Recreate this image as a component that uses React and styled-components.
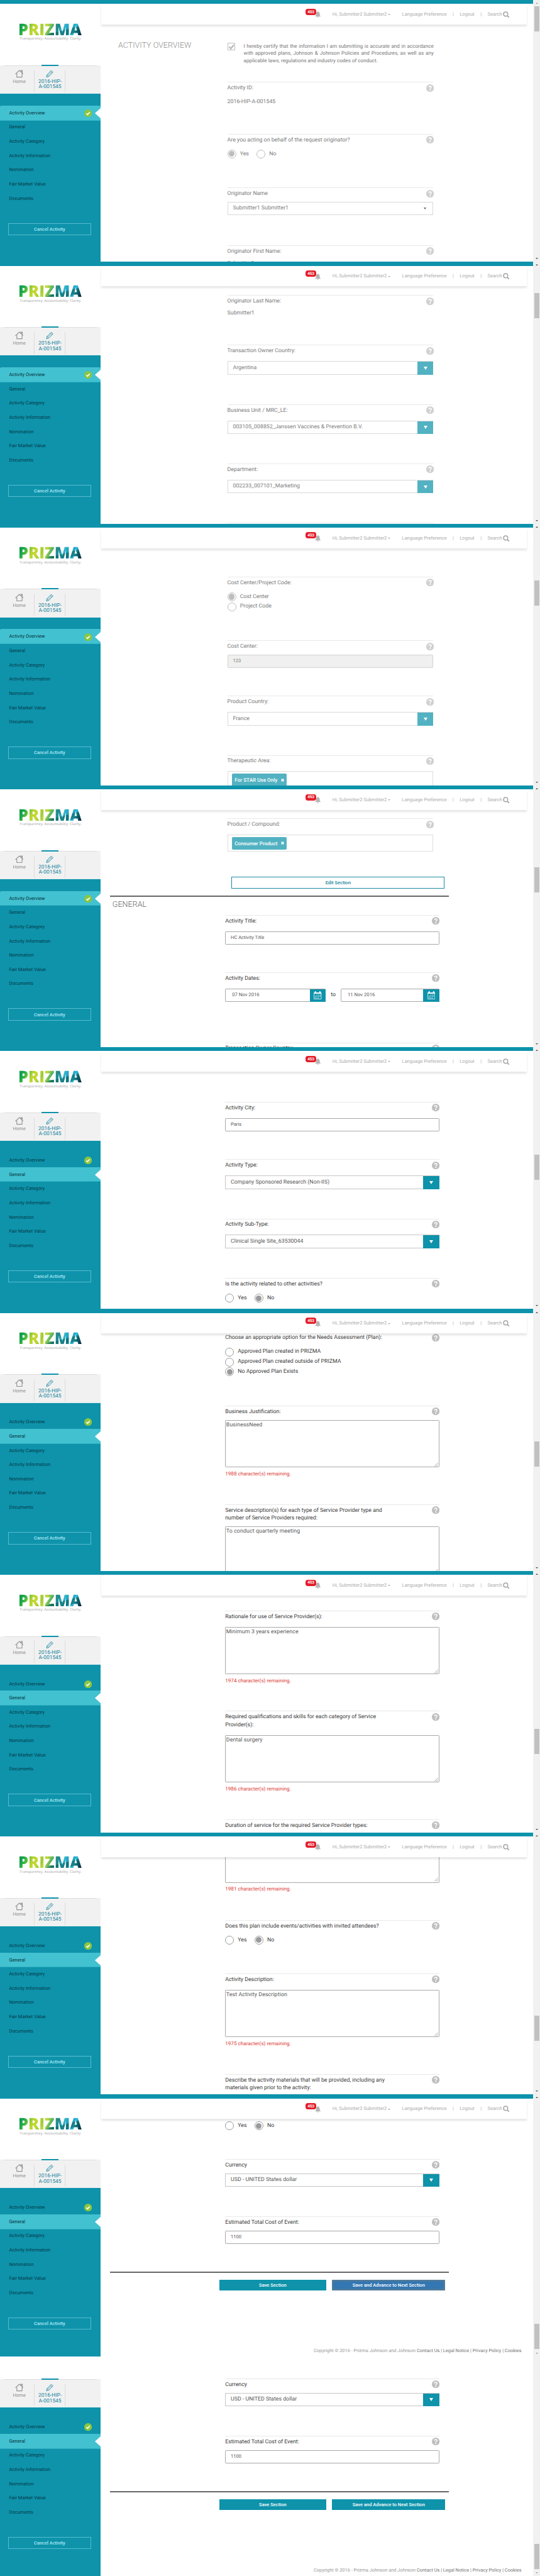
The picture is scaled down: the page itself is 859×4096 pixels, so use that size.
import React from "react";
import styled, { createGlobalStyle, css } from "styled-components";

// Design sizes are given for a 1366px wide page and drawn at this scale.
const SCALE = 0.62887;
const u = (n) => `${(n * SCALE).toFixed(3)}px`;

const teal = "#0e93ab";
const aqua = "#42c1d0";

const GlobalStyle = createGlobalStyle`
  *, *::before, *::after { box-sizing: border-box; }
  html, body { margin: 0; padding: 0; background: #fff; }
  body {
    font-family: Roboto, "Liberation Sans", sans-serif;
    font-size: ${u(14)};
    line-height: ${u(20)};
    color: #444;
    text-rendering: geometricPrecision;
  }
`;

const Page = styled.div`
  width: ${u(1366)};
  height: 4096px;
  overflow: hidden;
`;

const Frame = styled.section`
  display: grid;
  grid-template-columns: ${u(254.4)} ${u(1094.6)} ${u(17)};
  grid-template-rows: ${(p) => u(p.$short ? 0 : 10)} ${(p) => u(p.$short ? 555 : 652)};
  height: ${(p) => u(p.$short ? 555 : 662)};
  overflow: hidden;
  background: #fff;
`;

const TopBand = styled.div`
  grid-column: 1 / 3;
  background: ${teal};
`;

/* ---------- sidebar ---------- */

const Sidebar = styled.aside`
  grid-row: 2;
  grid-column: 1;
  display: flex;
  flex-direction: column;
  background: ${teal};
`;

const Brand = styled.div`
  height: ${(p) => u(p.$short ? 58 : 155)};
  padding: ${(p) => (p.$short ? 0 : `${u(40.5)} 0 0 ${u(46)}`)};
  background: #fff;
`;

const Logo = styled.div`
  width: ${u(162)};
  height: ${u(46)};
  font: 800 ${u(40.5)} / ${u(50)} "Open Sans", Roboto, sans-serif;
  white-space: nowrap;
  color: transparent;
  background:
    linear-gradient(165deg, transparent 62%, rgba(0, 75, 55, 0.45) 64% 78%, transparent 80%),
    linear-gradient(115deg, #0b8a45 0%, #17a94c 11%, #5fbf3c 17%, #b5d433 24%, #c6d92e 31%, #9bcb3a 38%, #c3da3a 43%, #5fb860 50%, #2b8c7c 56%, #1d8a93 60%, #35b6cf 68%, #1795b5 76%, #2fb9da 84%, #0f5f78 90%, #06222e 96%);
  background-clip: text;
  -webkit-background-clip: text;
`;

const Tagline = styled.div`
  margin-top: ${u(-3.5)};
  padding-left: ${u(3.5)};
  font: 400 ${u(9.15)} / ${u(12)} "Open Sans", sans-serif;
  color: #a3a3a3;
  white-space: nowrap;
`;

const Tabs = styled.nav`
  display: flex;
  height: ${u(72)};
  padding: 0 ${u(9)};
  background: #f1f1f1;
  border-bottom: 1px solid #e3eef0;
`;

const Tab = styled.div`
  position: relative;
  display: flex;
  flex-direction: column;
  align-items: center;
  width: ${(p) => u(p.$w)};
  padding-top: ${u(10)};
  border-top: 1px solid #dcdcdc;
  font-size: ${(p) => u(p.$active ? 13.35 : 12)};
  line-height: ${u(13)};
  text-align: center;
  color: ${(p) => (p.$active ? "#1b87a0" : "#8f8f8f")};

  svg { height: ${u(20)}; margin-bottom: ${u(4)}; }

  ${(p) => !p.$last && css`
    &::after {
      content: "";
      position: absolute;
      right: 0;
      top: ${u(11)};
      height: ${u(56)};
      border-right: 1px solid #dcdcdc;
    }
  `}

  ${(p) => p.$active && css`
    &::before {
      content: "";
      position: absolute;
      top: ${u(-3)};
      left: ${u(17.5)};
      width: ${u(42)};
      height: ${u(3.2)};
      background: ${teal};
    }
  `}
`;

const Menu = styled.ul`
  list-style: none;
  margin: ${u(30)} 0 0;
  padding: 0;
`;

const MenuItem = styled.li`
  position: relative;
  display: flex;
  align-items: center;
  justify-content: space-between;
  height: ${u(36)};
  padding: ${u(3)} ${u(22)} 0 ${u(23)};
  font-size: ${u(12)};
  color: #063a48;
  white-space: nowrap;

  ${(p) => p.$active && css`
    color: #06323c;
    background: ${aqua};
    box-shadow: 0 ${u(1)} 0 ${aqua};
    border-radius: ${p.$first ? `${u(4)} ${u(4)} 0 0` : 0};

    &::after {
      content: "";
      position: absolute;
      right: 0;
      top: ${u(6.5)};
      border-style: solid;
      border-color: transparent #fff transparent transparent;
      border-width: ${u(13.5)} ${u(15)} ${u(13.5)} 0;
    }
  `}
`;

const CancelButton = styled.button`
  width: ${u(209)};
  height: ${u(31)};
  margin: ${u(45)} 0 0 ${u(21)};
  padding: 0;
  border: 1px solid #58bccd;
  background: transparent;
  font: 500 ${u(11.9)} Roboto, sans-serif;
  color: #a9e6f3;
`;

/* ---------- header ---------- */

const Main = styled.main`
  grid-row: 2;
  grid-column: 2;
  display: flex;
  flex-direction: column;
  min-width: 0;
`;

const Header = styled.header`
  position: relative;
  z-index: 1;
  display: flex;
  flex: none;
  align-items: center;
  height: ${u(52)};
  margin: 0 ${u(17)} 0 ${u(2)};
  padding: ${u(2)} ${u(43)} 0 0;
  justify-content: flex-end;
  font-size: ${u(12)};
  color: #adadad;
  white-space: nowrap;
  background: #fff;
  box-shadow: 0 ${u(5)} ${u(5)} rgba(0, 0, 0, 0.1);
`;

const Notifications = styled.div`
  display: flex;
  align-items: center;
  margin-right: ${u(29)};
`;

const Badge = styled.span`
  display: flex;
  align-items: center;
  justify-content: center;
  z-index: 1;
  width: ${u(28)};
  height: ${u(16)};
  margin: ${u(-14)} ${u(-3.5)} 0 0;
  border-radius: ${u(6)};
  background: #e41e2b;
  color: #fff;
  font-size: ${u(10)};
  font-weight: 700;
`;

const Caret = styled.span`
  width: 0;
  height: 0;
  margin: ${(p) => p.$margin || 0};
  border: solid transparent;
  border-width: ${(p) => `${u(p.$h)} ${u(p.$w / 2)} 0`};
  border-top-color: ${(p) => p.$color || "currentColor"};
`;

const Pipe = styled.span`
  width: ${u(33)};
  text-align: center;
`;

/* ---------- form ---------- */

const Content = styled.div`
  display: flex;
  flex: 1;
  flex-direction: column;
  min-height: 0;
  overflow: hidden;
`;

const Section = styled.div`
  flex: none;
  width: ${(p) => u(p.$faded ? 521 : 541.5)};
  margin-left: ${(p) => u(p.$faded ? 320.6 : 315.2)};
  padding-top: ${(p) => u(p.$top || 0)};
  margin-top: ${(p) => u(p.$shift || 0)};
  --label: ${(p) => (p.$faded ? "#7c7c7c" : "#3c3c3c")};
  --value: ${(p) => (p.$faded ? "#808080" : "#5a5a5a")};
  --line: ${(p) => (p.$faded ? "#d2d2d2" : "#a9a9a9")};
  --box: ${(p) => (p.$faded ? "#d9d9d9" : "#c6c6c6")};
  --accent: ${(p) => (p.$faded ? "#52b2c2" : teal)};
  --help: ${(p) => (p.$faded ? "#d0d0d0" : "#bfbfbf")};
  --radio: ${(p) => (p.$faded ? "#bdbdbd" : "#9a9a9a")};
`;

const FieldBox = styled.div`
  height: ${(p) => u(p.$h)};
  border-top: 1px solid ${(p) => (p.$bare ? "transparent" : "#e9e9e9")};
`;

const LabelRow = styled.div`
  display: flex;
  justify-content: space-between;
  align-items: flex-start;
  height: ${(p) => u(p.$offset - 1.5)};
  padding-top: ${u(4.5)};
`;

const LabelText = styled.label`
  max-width: ${u(415)};
  color: var(--label);
`;

const HelpIcon = styled.svg`
  flex: none;
  width: ${u(19.5)};
  height: ${u(19.5)};
  margin: ${u(-0.8)} ${u(-1)} 0 0;
  fill: var(--help);
`;

const Value = styled.div`
  color: var(--label);
`;

const Control = styled.div`
  display: flex;
  align-items: center;
  justify-content: space-between;
  height: ${u(34)};
  width: ${(p) => (p.$w ? u(p.$w) : "100%")};
  padding-left: ${(p) => u(p.$pad || 12.5)};
  border: 1px solid ${(p) => (p.$input ? "var(--line)" : "var(--box)")};
  border-radius: ${(p) => (p.$input ? u(2) : 0)};
  background: ${(p) => (p.$disabled ? "#f0f0f0" : "#fff")};
  font-size: ${(p) => u(p.$size || 14)};
  color: var(--value);
  white-space: nowrap;
`;

const ControlButton = styled.span`
  display: flex;
  align-items: center;
  justify-content: center;
  align-self: stretch;
  width: ${u(40.5)};
  margin: 0 -1px -1px 0;
  background: var(--accent);
  color: #fff;
`;

const RadioGroup = styled.div`
  display: flex;
  flex-direction: ${(p) => (p.$stack ? "column" : "row")};
  gap: ${(p) => u(p.$stack ? 3.2 : 19.5)};
`;

const RadioLabel = styled.span`
  display: flex;
  align-items: center;
  gap: ${u(9.5)};
  height: ${u(22)};
  color: var(--label);
  white-space: nowrap;
`;

const RadioDot = styled.i`
  display: flex;
  flex: none;
  align-items: center;
  justify-content: center;
  width: ${u(22.5)};
  height: ${u(22.5)};
  border: 1px solid var(--radio);
  border-radius: 50%;

  &::after {
    content: "";
    width: ${u(14.5)};
    height: ${u(14.5)};
    border-radius: 50%;
    background: ${(p) => (p.$on ? "var(--radio)" : "transparent")};
  }
`;

const TextBox = styled.div`
  display: flex;
  justify-content: space-between;
  height: ${u(120)};
  padding: ${u(2)} ${u(1)} ${u(1)} ${u(1)};
  border: 1px solid #a9a9a9;
  border-radius: ${u(2)};
  color: var(--value);
  letter-spacing: ${u(0.16)};
`;

const Grip = styled.svg`
  align-self: flex-end;
  width: ${u(9)};
  height: ${u(9)};
  margin-left: auto;
  stroke: #666;
  fill: none;
`;

const Remaining = styled.div`
  padding-top: ${u(5.5)};
  font-size: ${u(12.95)};
  color: #dc3b35;
`;

const TagBox = styled.div`
  height: ${u(43.5)};
  padding: ${u(4.5)} ${u(10)};
  border: 1px solid #dedede;
`;

const Tag = styled.span`
  display: inline-flex;
  align-items: center;
  gap: ${u(9)};
  height: ${u(31.5)};
  padding: 0 ${u(7)};
  border-radius: ${u(3)};
  background: var(--accent);
  color: #fff;
  font-size: ${u(12.95)};
  font-weight: 500;
  white-space: nowrap;

  svg { width: ${u(8)}; height: ${u(8)}; stroke: #fff; }
`;

const DateRow = styled.div`
  display: flex;
  align-items: center;
  justify-content: space-between;
  color: var(--label);
`;

const Intro = styled.div`
  display: flex;
  flex: none;
  align-items: flex-start;
  height: ${u(145.3)};
  padding: ${u(45.5)} 0 0 ${u(44.5)};
`;

const SectionTitle = styled.h2`
  margin: 0;
  width: ${u(276)};
  font-size: ${u(20)};
  line-height: ${u(16)};
  font-weight: 300;
  color: ${(p) => (p.$dark ? "#666" : "#8e8e8e")};
  white-space: nowrap;
`;

const CheckBox = styled.span`
  display: flex;
  align-items: center;
  justify-content: center;
  flex: none;
  width: ${u(20)};
  height: ${u(20)};
  margin-right: ${u(21.5)};
  border: 1px solid #bdbdbd;

  svg { width: ${u(17)}; height: ${u(17)}; }
`;

const Statement = styled.p`
  width: ${u(480.5)};
  margin: ${u(0.5)} 0 0;
  font-size: ${u(12.95)};
  line-height: ${u(18)};
  text-align: justify;
  color: #777;
`;

const EditButton = styled.button`
  flex: none;
  width: ${u(539.5)};
  height: ${u(31)};
  margin-left: ${u(331)};
  border: 1px solid #1b8ba1;
  background: #fff;
  font: 500 ${u(12)} Roboto, sans-serif;
  color: #16879d;
`;

const Rule = styled.hr`
  flex: none;
  width: ${u(857)};
  height: ${u(3)};
  margin: ${(p) => u(p.$top)} 0 0 ${u(24.6)};
  border: 0;
  background: #666;
`;

const GeneralTitle = styled.div`
  flex: none;
  height: ${u(45.5)};
  padding: ${u(13)} 0 0 ${u(30)};
`;

const Actions = styled.div`
  display: flex;
  flex: none;
  gap: ${u(15)};
  margin: ${u(18)} 0 0 ${u(300.6)};
`;

const ActionButton = styled.button`
  width: ${(p) => u(p.$w)};
  height: ${u(27)};
  padding: 0;
  border: 0;
  background: ${(p) => (p.$focused ? "#3377b3" : teal)};
  box-shadow: ${(p) => (p.$focused ? `inset 0 0 ${u(5)} ${u(2)} #6b7f86` : "none")};
  font: 500 ${u(12)} Roboto, sans-serif;
  color: #fff;
`;

const Footer = styled.footer`
  margin: ${u(143)} ${u(30)} 0 0;
  text-align: right;
  font-size: ${u(11.82)};
  color: #999;
  white-space: nowrap;

  span { color: #757575; }
`;

/* ---------- scrollbar ---------- */

const ScrollTrack = styled.div`
  grid-row: 1 / 3;
  grid-column: 3;
  display: flex;
  flex-direction: column;
  align-items: center;
  background: #f1f1f1;
`;

const ScrollArrow = styled.span`
  flex: none;
  width: 0;
  height: 0;
  margin: ${u(6.5)} 0;
  border: solid transparent;
  border-width: ${(p) => (p.$up ? `0 ${u(3.7)} ${u(4)}` : `${u(4)} ${u(3.7)} 0`)};
  border-bottom-color: ${(p) => (p.$up ? (p.$off ? "#a3a3a3" : "#505050") : "transparent")};
  border-top-color: ${(p) => (p.$up ? "transparent" : p.$off ? "#a3a3a3" : "#505050")};
`;

const ScrollLane = styled.div`
  flex: 1;
  width: ${u(13)};
`;

const Thumb = styled.div`
  height: ${u(64)};
  background: #c1c1c1;
`;

/* ---------- icons ---------- */

const HomeIcon = () => (
  <svg viewBox="0 0 22 20" fill="none" stroke="#939393" strokeWidth="1.9">
    <path d="M.7 11 10.8 1.7 21 11" />
    <path d="M4.4 9v9.6h13.2V9" strokeWidth="1.8" />
    <path d="M14.6 4.5V1.4h3.8v6.6" strokeWidth="1.6" fill="#b5b5b5" />
  </svg>
);

const PencilIcon = () => (
  <svg viewBox="0 0 20 20" fill="none" stroke="#1b87a0" strokeWidth="1.4">
    <path d="M1.5 18.5 3 12.6 13.8 1.8 18 6 7.2 16.9Z" />
    <path d="M11.6 4 15.8 8.2M5 14.6 13.8 5.9M3 12.6 7.2 16.9" strokeWidth="1.1" />
  </svg>
);

const DoneIcon = styled.svg`
  width: ${u(19.5)};
  height: ${u(19.5)};
`;

const Done = () => (
  <DoneIcon viewBox="0 0 20 20">
    <circle cx="10" cy="10" r="10" fill="#8cc63f" />
    <path d="M5.6 10.5 8.6 13.5 14.3 6.8" fill="none" stroke="#fff" strokeWidth="2.7" />
  </DoneIcon>
);

const BellSvg = styled.svg`
  width: ${u(15)};
  height: ${u(16)};
  fill: #b5b5b5;
`;

const SearchSvg = styled.svg`
  width: ${u(17)};
  height: ${u(17)};
  margin: 0 0 0 ${u(2)};
  fill: none;
  stroke: #a6a6a6;
`;

const CalendarSvg = styled.svg`
  width: ${u(20)};
  height: ${u(21)};
`;

const Help = () => (
  <HelpIcon viewBox="0 0 20 20">
    <circle cx="10" cy="10" r="10" />
    <path d="M6.9 7.6C7 3.9 13.2 3.9 13.2 7.5 13.2 9.8 10.2 9.8 10.2 12.3" fill="none" stroke="#fff" strokeWidth="2.4" />
    <circle cx="10.2" cy="15.2" r="1.6" fill="#fff" />
  </HelpIcon>
);

const Calendar = () => (
  <CalendarSvg viewBox="0 0 20 21">
    <path d="M1 4.5h18V20H1Z" fill="none" stroke="#fff" strokeWidth="1.2" />
    <path d="M.5 3.5h19v3H.5ZM2.5 .5H6v4H2.5ZM14 .5h3.5v4H14Z" fill="#fff" />
    <path d="M7.5 9.5h10M3.5 13h14M3.5 16.8h10" stroke="#fff" strokeWidth="1.9" strokeDasharray="1.9 2" />
  </CalendarSvg>
);

/* ---------- composed parts ---------- */

const MENU = [
  "Activity Overview",
  "General",
  "Activity Category",
  "Activity Information",
  "Nomination",
  "Fair Market Value",
  "Documents",
];

function Side({ active, short }) {
  return (
    <Sidebar>
      <Brand $short={short}>
        {!short && (
          <>
            <Logo>PRIZMA</Logo>
            <Tagline>Transparency. Accountability. Clarity.</Tagline>
          </>
        )}
      </Brand>
      <Tabs>
        <Tab $w={79.5}>
          <HomeIcon />
          Home
        </Tab>
        <Tab $w={77} $active>
          <PencilIcon />
          2016-HIP-
          <br />
          A-001545
        </Tab>
        <Tab $w={81} $last />
      </Tabs>
      <Menu>
        {MENU.map((name, i) => (
          <MenuItem key={name} $active={i === active} $first={i === 0}>
            {name}
            {i === 0 && <Done />}
          </MenuItem>
        ))}
      </Menu>
      <CancelButton>Cancel Activity</CancelButton>
    </Sidebar>
  );
}

const TopBar = () => (
  <Header>
    <Notifications>
      <Badge>453</Badge>
      <BellSvg viewBox="0 0 15 16">
        <path d="M7.5 0c.8 0 1.2.6 1.2 1.3 2.5.7 3.300 2.700 3.300 5.200 0 3.500 1 5.200 3 6.500H0c2-1.300 3-3 3-6.500 0-2.500.8-4.500 3.300-5.200C6.300.6 6.700 0 7.500 0ZM5.300 14h4.400c-.3 2.300-4.100 2.300-4.400 0Z" />
      </BellSvg>
    </Notifications>
    Hi, Submitter2 Submitter2
    <Caret $w={8} $h={4} $margin={`0 ${u(29.5)} 0 ${u(2.5)}`} />
    Language Preference
    <Pipe>|</Pipe>
    Logout
    <Pipe>|</Pipe>
    Search
    <SearchSvg viewBox="0 0 17 17">
      <circle cx="7" cy="7" r="5.3" strokeWidth="2.4" />
      <path d="M10.8 10.8 15.5 15.5" strokeWidth="2.8" />
    </SearchSvg>
  </Header>
);

function Field({ label, h, offset = 41, bare, children }) {
  return (
    <FieldBox $h={h} $bare={bare}>
      <LabelRow $offset={offset}>
        <LabelText>{label}</LabelText>
        {label && <Help />}
      </LabelRow>
      {children}
    </FieldBox>
  );
}

const Select = ({ children }) => (
  <Control>
    {children}
    <ControlButton>
      <Caret $w={12} $h={9} $color="#fff" />
    </ControlButton>
  </Control>
);

const Input = ({ children, disabled }) => (
  <Control $input $size={12} $disabled={disabled}>
    {children}
  </Control>
);

const DateInput = ({ children, w }) => (
  <Control $input $w={w} $size={12.3} $pad={16}>
    {children}
    <ControlButton>
      <Calendar />
    </ControlButton>
  </Control>
);

const Radios = ({ options, on, stack }) => (
  <RadioGroup $stack={stack}>
    {options.map((name, i) => (
      <RadioLabel key={name}>
        <RadioDot $on={i === on} />
        {name}
      </RadioLabel>
    ))}
  </RadioGroup>
);

const TextArea = ({ children, left }) => (
  <>
    <TextBox>
      {children && <span>{children}</span>}
      <Grip viewBox="0 0 9 9">
        <path d="M0 9 9 0M5 9 9 5" />
      </Grip>
    </TextBox>
    {left && <Remaining>{left} character(s) remaining.</Remaining>}
  </>
);

const TagField = ({ children }) => (
  <TagBox>
    <Tag>
      {children}
      <svg viewBox="0 0 8 8" strokeWidth="2.4">
        <path d="M1 1 7 7M7 1 1 7" />
      </svg>
    </Tag>
  </TagBox>
);

const YES_NO = ["Yes", "No"];

function Screen({ active, thumb, short, first, last, children }) {
  return (
    <Frame $short={short}>
      <TopBand />
      <Side active={active} short={short} />
      <Main>
        {!short && <TopBar />}
        <Content>{children}</Content>
      </Main>
      <ScrollTrack>
        {!short && <ScrollArrow $up $off={first} />}
        <ScrollLane>
          <Thumb style={{ marginTop: thumb * SCALE }} />
        </ScrollLane>
        <ScrollArrow $off={last} />
      </ScrollTrack>
    </Frame>
  );
}

const CostScreen = ({ short }) => (
  <Screen active={1} thumb={short ? 474 : 564} short={short} last>
    <Section $shift={short ? 0 : -34} $top={short ? 56 : 0}>
      {!short && (
        <Field h={135} offset={40} bare>
          <Radios options={YES_NO} on={1} />
        </Field>
      )}
      <Field label="Currency" h={145} offset={36}>
        <Select>USD - UNITED States dollar</Select>
      </Field>
      <Field label="Estimated Total Cost of Event:" h={140} offset={36}>
        <Input>1100</Input>
      </Field>
    </Section>
    <Rule $top={0} />
    <Actions>
      <ActionButton $w={270}>Save Section</ActionButton>
      <ActionButton $w={286.5} $focused={!short}>
        Save and Advance to Next Section
      </ActionButton>
    </Actions>
    <Footer>
      Copyright © 2016 - Prizma Johnson and Johnson{" "}
      <span>Contact Us | Legal Notice | Privacy Policy | Cookies</span>
    </Footer>
  </Screen>
);

export default function App() {
  return (
    <Page>
      <GlobalStyle />

      <Screen active={0} thumb={0} first>
        <Intro>
          <SectionTitle>ACTIVITY OVERVIEW</SectionTitle>
          <CheckBox>
            <svg viewBox="0 0 17 17" fill="none" stroke="#bababa" strokeWidth="3.8">
              <path d="M2.5 8.5 7 13 14.5 3.5" />
            </svg>
          </CheckBox>
          <Statement>
            I hereby certify that the information I am submitting is accurate and in accordance with
            approved plans, Johnson &amp; Johnson Policies and Procedures, as well as any applicable
            laws, regulations and industry codes of conduct.
          </Statement>
        </Intro>
        <Section $faded>
          <Field label="Activity ID:" h={131.1}>
            <Value>2016-HIP-A-001545</Value>
          </Field>
          <Field label="Are you acting on behalf of the request originator?" h={135.9} offset={40}>
            <Radios options={YES_NO} on={0} />
          </Field>
          <Field label="Originator Name" h={145.9} offset={36}>
            <Control>
              Submitter1 Submitter1
              <Caret $w={9.5} $h={6} $color="#666" $margin={`0 ${u(17)} 0 0`} />
            </Control>
          </Field>
          <Field label="Originator First Name:" h={100} offset={36}>
            <Value>Submitter1</Value>
          </Field>
        </Section>
      </Screen>

      <Screen active={0} thumb={63}>
        <Section $faded $top={22.2}>
          <Field label="Originator Last Name:" h={125.8} offset={36}>
            <Value>Submitter1</Value>
          </Field>
          <Field label="Transaction Owner Country:" h={150.2}>
            <Select>Argentina</Select>
          </Field>
          <Field label="Business Unit / MRC_LE:" h={150}>
            <Select>003105_008852_Janssen Vaccines &amp; Prevention B.V.</Select>
          </Field>
          <Field label="Department:" h={150}>
            <Select>002233_007101_Marketing</Select>
          </Field>
          <FieldBox $h={20} />
        </Section>
      </Screen>

      <Screen active={0} thumb={127}>
        <Section $faded $top={72}>
          <Field label="Cost Center/Project Code:" h={161.5} offset={40}>
            <Radios options={["Cost Center", "Project Code"]} on={0} stack />
          </Field>
          <Field label="Cost Center:" h={139.8} offset={36}>
            <Input disabled>123</Input>
          </Field>
          <Field label="Product Country:" h={149.9}>
            <Select>France</Select>
          </Field>
          <Field label="Therapeutic Area:" h={120}>
            <TagField>For STAR Use Only</TagField>
          </Field>
        </Section>
      </Screen>

      <Screen active={0} thumb={191}>
        <Section $faded $top={21.3}>
          <Field label="Product / Compound:" h={146.7}>
            <TagField>Consumer Product</TagField>
          </Field>
        </Section>
        <EditButton>Edit Section</EditButton>
        <Rule $top={18} />
        <GeneralTitle>
          <SectionTitle $dark>GENERAL</SectionTitle>
        </GeneralTitle>
        <Section>
          <Field label="Activity Title:" h={144.8}>
            <Input>HC Activity Title</Input>
          </Field>
          <Field label="Activity Dates:" h={177.7}>
            <DateRow>
              <DateInput w={254.5}>07 Nov 2016</DateInput>
              to
              <DateInput w={249.5}>11 Nov 2016</DateInput>
            </DateRow>
          </Field>
          <Field label="Transaction Owner Country:" h={100} />
        </Section>
      </Screen>

      <Screen active={1} thumb={255}>
        <Section $top={76}>
          <Field label="Activity City:" h={145.3}>
            <Input>Paris</Input>
          </Field>
          <Field label="Activity Type:" h={150}>
            <Select>Company Sponsored Research (Non-IIS)</Select>
          </Field>
          <Field label="Activity Sub-Type:" h={150}>
            <Select>Clinical Single Site_63530044</Select>
          </Field>
          <Field label="Is the activity related to other activities?" h={100} offset={40}>
            <Radios options={YES_NO} on={1} />
          </Field>
        </Section>
      </Screen>

      <Screen active={1} thumb={319}>
        <Section $shift={-4.5}>
          <Field
            label="Choose an appropriate option for the Needs Assessment (Plan):"
            h={186.9}
            offset={40}
          >
            <Radios
              options={[
                "Approved Plan created in PRIZMA",
                "Approved Plan created outside of PRIZMA",
                "No Approved Plan Exists",
              ]}
              on={2}
              stack
            />
          </Field>
          <Field label="Business Justification:" h={249.1} offset={36}>
            <TextArea left={1988}>BusinessNeed</TextArea>
          </Field>
          <Field
            label="Service description(s) for each type of Service Provider type and number of Service Providers required:"
            h={250}
            offset={56}
          >
            <TextArea>To conduct quarterly meeting</TextArea>
          </Field>
        </Section>
      </Screen>

      <Screen active={1} thumb={383}>
        <Section $top={38.5}>
          <Field label="Rationale for use of Service Provider(s):" h={253.5}>
            <TextArea left={1974}>Minimum 3 years experience</TextArea>
          </Field>
          <Field
            label="Required qualifications and skills for each category of Service Provider(s):"
            h={274.3}
            offset={61}
          >
            <TextArea left={1986}>Dental surgery</TextArea>
          </Field>
          <Field label="Duration of service for the required Service Provider types:" h={100} />
        </Section>
      </Screen>

      <Screen active={1} thumb={446}>
        <Section $shift={-96.5}>
          <Field h={255.1} bare>
            <TextArea left={1981} />
          </Field>
          <Field
            label="Does this plan include events/activities with invited attendees?"
            h={135.4}
            offset={40}
          >
            <Radios options={YES_NO} on={1} />
          </Field>
          <Field label="Activity Description:" h={254.5}>
            <TextArea left={1975}>Test Activity Description</TextArea>
          </Field>
          <Field
            label="Describe the activity materials that will be provided, including any materials given prior to the activity:"
            h={100}
          />
        </Section>
      </Screen>

      <CostScreen />
      <CostScreen short />
    </Page>
  );
}
